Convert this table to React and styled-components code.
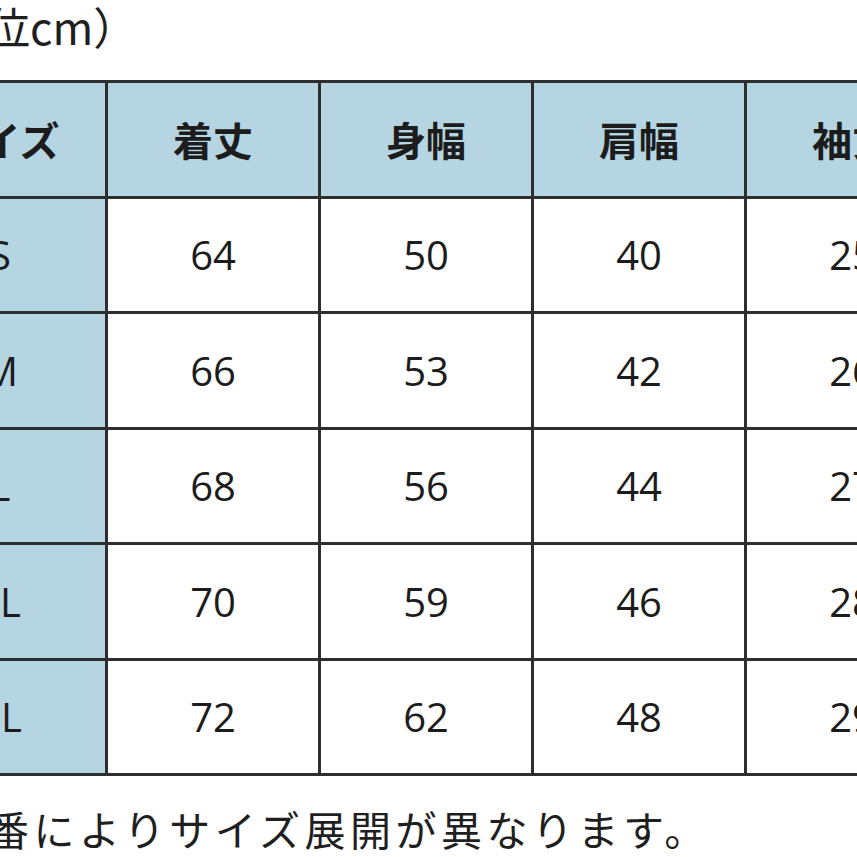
import styled, { createGlobalStyle } from "styled-components";

const GlobalStyle = createGlobalStyle`
  html, body {
    margin: 0;
    padding: 0;
    background: #ffffff;
  }
  body {
    font-family: "Noto Sans CJK JP", "Noto Sans", sans-serif;
    color: #1c1c1c;
  }
`;

const Page = styled.div`
  width: 857px;
  height: 857px;
  overflow: hidden;
  background: #ffffff;
`;

const Unit = styled.div`
  margin-left: -102px;
  height: 52px;
  font-size: 44px;
  line-height: 52px;
  white-space: nowrap;
  color: #1f1f1f;
`;

const Chart = styled.div`
  margin-top: 28px;
  margin-left: -108px;
  width: max-content;
  display: grid;
  grid-template-columns: repeat(5, 210px);
  grid-auto-rows: 112.5px;
  gap: 3px;
  padding: 3px;
  background: #2e2e2e;
`;

const Cell = styled.div`
  display: flex;
  align-items: center;
  justify-content: center;
  background: ${(p) => (p.$shaded ? "#b5d5e3" : "#ffffff")};
  font-family: ${(p) =>
    p.$head ? '"Noto Sans CJK JP", sans-serif' : '"Open Sans", "Noto Sans", sans-serif'};
  font-weight: ${(p) => (p.$head ? 700 : 500)};
  font-size: 40px;
  color: #1c1c1c;
  white-space: nowrap;
`;

const Note = styled.div`
  margin-top: 28px;
  margin-left: -103px;
  font-size: 41px;
  line-height: 48px;
  letter-spacing: 4.5px;
  white-space: nowrap;
  color: #1f1f1f;
`;

const headers = ["サイズ", "着丈", "身幅", "肩幅", "袖丈"];

const rows = [
  ["S", 64, 50, 40, 25],
  ["M", 66, 53, 42, 26],
  ["L", 68, 56, 44, 27],
  ["LL", 70, 59, 46, 28],
  ["3L", 72, 62, 48, 29],
];

export default function App() {
  return (
    <>
      <GlobalStyle />
      <Page>
        <Unit>（単位cm）</Unit>
        <Chart>
          {headers.map((h) => (
            <Cell key={h} $head $shaded>
              {h}
            </Cell>
          ))}
          {rows.map((row) =>
            row.map((v, i) => (
              <Cell key={`${row[0]}-${i}`} $shaded={i === 0}>
                {v}
              </Cell>
            ))
          )}
        </Chart>
        <Note>※品番によりサイズ展開が異なります。</Note>
      </Page>
    </>
  );
}
